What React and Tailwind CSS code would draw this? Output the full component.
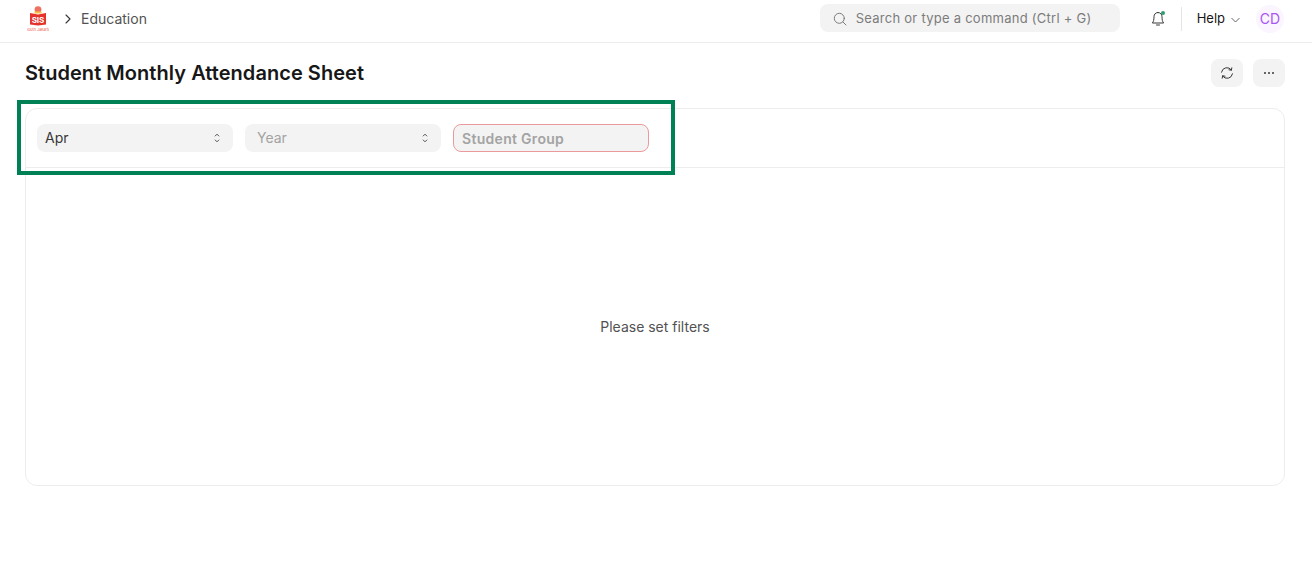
import React from "react";

const Updown = () => (
  <svg width="8" height="14" viewBox="0 0 8 14" fill="none" stroke="#525252" strokeWidth="1" strokeLinecap="round" strokeLinejoin="round">
    <path d="M2.200 5 4 3.200 5.800 5" />
    <path d="M2.200 9 4 10.800 5.800 9" />
  </svg>
);

const Logo = () => (
  <svg width="22" height="25" viewBox="0 0 22 25" className="block">
    <circle cx="11" cy="3.600" r="3.400" fill="#f0705f" />
    <path d="M7.500 5.500h7v2h-7z" fill="#f6c34a" />
    <path d="M3 7 11 8.500 19 7v11.500l-8 1-8-1z" fill="#e5322d" />
    <text x="11" y="16.500" textAnchor="middle" fontSize="8" fontWeight="700" fill="#ffffff" fontFamily="Inter, sans-serif">SIS</text>
    <text x="11" y="24.500" textAnchor="middle" fontSize="3.800" fill="#ee5a50" fontFamily="Inter, sans-serif">South Jakarta</text>
  </svg>
);

const Select = ({ label, muted }) => (
  <div className={`w-[196px] h-7 rounded-lg bg-[#f3f3f3] flex items-center justify-between text-sm ${muted ? "pl-3 text-[#a3a3a3]" : "pl-2 text-[#383838]"} pr-3`}>
    <span>{label}</span>
    <Updown />
  </div>
);

export default function App() {
  return (
    <div className="relative w-[1312px] h-[580px] bg-white overflow-hidden font-['Inter',sans-serif] text-[#171717]">
      <header className="h-[43px] border-b border-[#ededed] flex items-center pl-[27px] pr-[28px] pb-[6px]">
        <div className="mt-[1px]"><Logo /></div>
        <svg width="6" height="10" viewBox="0 0 6 10" fill="none" stroke="#383838" strokeWidth="1.100" strokeLinecap="round" strokeLinejoin="round" className="ml-[16px] mt-[2px]">
          <path d="M1 1l4 4-4 4" />
        </svg>
        <span className="ml-[10px] mt-[2px] text-sm text-[#525252]">Education</span>
        <div className="ml-auto w-[300px] h-7 rounded-lg bg-[#f3f3f3] flex items-center pl-[13px] pt-[1px] text-[13px] tracking-[0.26px] text-[#7c7c7c]">
          <svg width="14" height="14" viewBox="0 0 14 14" fill="none" stroke="#7c7c7c" strokeWidth="1" strokeLinecap="round">
            <circle cx="6.300" cy="6.300" r="5" />
            <path d="m10 10 3 3" />
          </svg>
          <span className="ml-[9px]">Search or type a command (Ctrl + G)</span>
        </div>
        <div className="relative ml-[30px] mt-[2px] w-4 h-4">
          <svg width="16" height="16" viewBox="0 0 16 16" fill="none" stroke="#383838" strokeWidth="1" strokeLinecap="round" strokeLinejoin="round">
            <path d="M8 1.500c-2.600 0-4 2-4 4.200 0 3.200-.5 4.800-1.600 6.300h11.200c-1.100-1.500-1.600-3.100-1.600-6.300 0-2.200-1.400-4.200-4-4.200z" />
            <path d="M6.500 14h3" />
          </svg>
          <span className="absolute right-[1px] top-0 w-[4px] h-[4px] rounded-full bg-[#2f9e6e]" />
        </div>
        <div className="ml-[15px] mt-[2px] w-px h-6 bg-[#e5e5e5]" />
        <span className="ml-[15px] mt-[2px] text-[13px] text-[#171717]">Help</span>
        <svg width="9" height="6" viewBox="0 0 9 6" fill="none" stroke="#525252" strokeWidth="0.900" strokeLinecap="round" strokeLinejoin="round" className="ml-[6px] mt-[4px]">
          <path d="M.8 1.300 4.500 5l3.700-3.700" />
        </svg>
        <div className="ml-[16px] mt-[2px] w-7 h-7 rounded-full bg-[#faf5ff] text-[#a855f7] text-sm flex items-center justify-center">CD</div>
      </header>

      <div className="h-[65px] flex items-center justify-between pl-[25px] pr-[27px] pb-[6px]">
        <h1 className="text-xl font-semibold text-[#171717] tracking-[0.05px]">Student Monthly Attendance Sheet</h1>
        <div className="flex gap-[10px]">
          <button className="w-8 h-7 rounded-lg bg-[#f3f3f3] flex items-center justify-center">
            <svg width="14" height="14" viewBox="0 0 14 14" fill="none" stroke="#383838" strokeWidth="1" strokeLinecap="round" strokeLinejoin="round">
              <path d="M1.500 6.200A5.500 5.500 0 0 1 11.400 4" />
              <path d="M12.500 7.800A5.500 5.500 0 0 1 2.600 10" />
              <path d="M11.800 1.800 11.400 4.200 9 3.800" />
              <path d="M2.200 12.200 2.600 9.800 5 10.200" />
            </svg>
          </button>
          <button className="w-8 h-7 rounded-lg bg-[#f3f3f3] flex items-center justify-center gap-[2px]">
            <span className="w-[2px] h-[2px] rounded-full bg-[#383838]" />
            <span className="w-[2px] h-[2px] rounded-full bg-[#383838]" />
            <span className="w-[2px] h-[2px] rounded-full bg-[#383838]" />
          </button>
        </div>
      </div>

      <section className="ml-[25px] w-[1260px] h-[378px] border border-[#ededed] rounded-xl flex flex-col">
        <div className="h-[59px] shrink-0 border-b border-[#ededed] flex items-center gap-3 pl-[11px]">
          <Select label="Apr" />
          <Select label="Year" muted />
          <div className="w-[196px] h-7 rounded-lg bg-[#f3f3f3] border border-[#ea9a9a] flex items-center pl-2 pt-[1px] text-sm font-semibold tracking-[0.3px] text-[#a3a3a3]">Student Group</div>
        </div>
        <div className="flex-1 flex items-center justify-center text-sm text-[#525252]">Please set filters</div>
      </section>

      <div className="absolute left-[17px] top-[100px] w-[658px] h-[75px] border-[4px] border-[#008055] pointer-events-none" />
    </div>
  );
}
